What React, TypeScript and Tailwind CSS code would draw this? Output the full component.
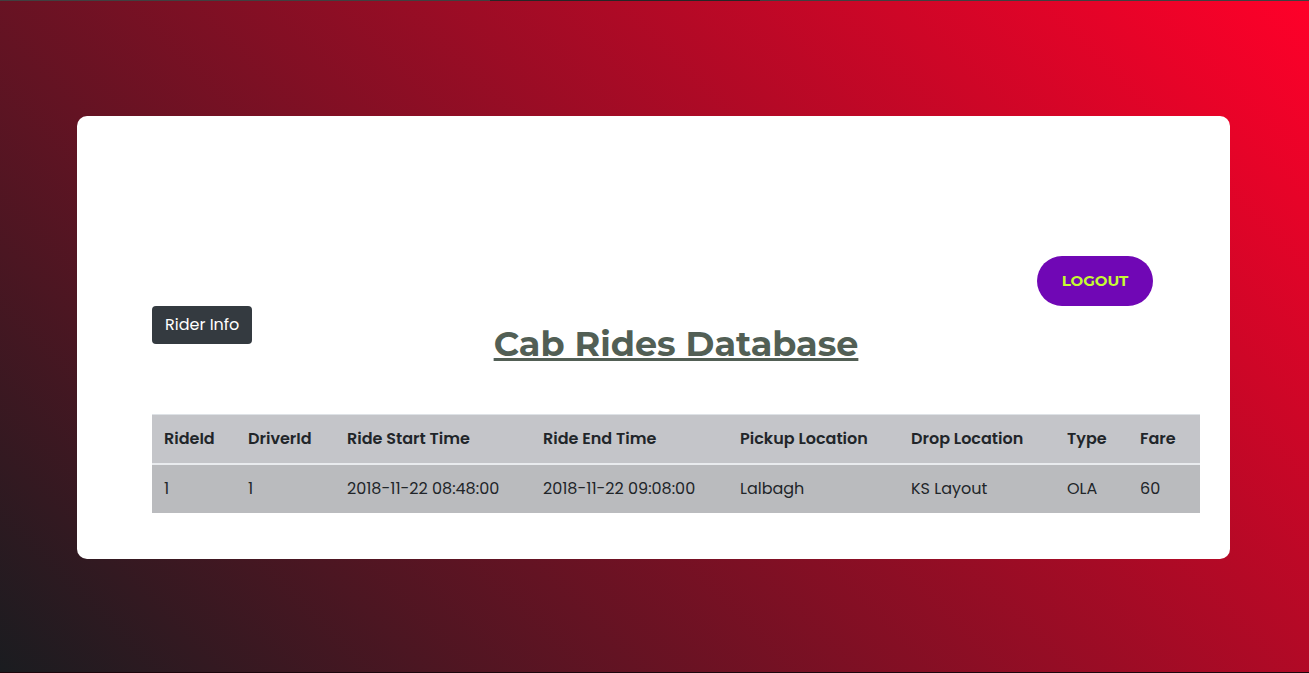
const columns = [
  { label: "RideId", width: "w-[84px]" },
  { label: "DriverId", width: "w-[99px]" },
  { label: "Ride Start Time", width: "w-[196px]" },
  { label: "Ride End Time", width: "w-[197px]" },
  { label: "Pickup Location", width: "w-[171px]" },
  { label: "Drop Location", width: "w-[156px]" },
  { label: "Type", width: "w-[73px]" },
  { label: "Fare", width: "w-[72px]" },
];

const rides = [
  ["1", "1", "2018-11-22 08:48:00", "2018-11-22 09:08:00", "Lalbagh", "KS Layout", "OLA", "60"],
];

export default function App() {
  return (
    <div className="flex min-h-screen flex-col border-b border-[#1c060c] bg-[linear-gradient(45deg,#1a1c20,#ff0029)] font-[Poppins,Inter,sans-serif] text-base text-[#212529]">
      <div className="flex h-px justify-center bg-[#404040]">
        <div className="mr-[59px] w-[270px] bg-[#262626]" />
      </div>
      <main className="flex flex-1 flex-col justify-center pt-0.5 pr-[79px] pl-[77px]">
        <section className="flex flex-col rounded-[10px] bg-white pt-[140px] pr-[30px] pb-[46px] pl-[75px]">
          <button
            type="button"
            className="mr-[47px] h-[50px] w-[116px] self-end rounded-full bg-[#7007b5] font-[Montserrat,Inter,sans-serif] text-[15px] font-bold text-[#c6fb32]"
          >
            LOGOUT
          </button>
          <button
            type="button"
            className="h-[38px] self-start rounded bg-[#343a40] px-[13px] text-white"
          >
            Rider Info
          </button>
          <h1 className="-mt-[22px] mb-12 self-center font-[Montserrat,Inter,sans-serif] text-[35px] leading-[44px] font-bold text-[#525f55] underline decoration-3 underline-offset-2">
            Cab Rides Database
          </h1>
          <table className="w-full table-fixed border-collapse bg-[#c6c8ca] text-left">
            <thead>
              <tr className="h-[49px] border-t border-b-2 border-t-[#dee2e6] border-b-[#e9ebee] bg-[#c4c5c9]">
                {columns.map((column) => (
                  <th key={column.label} scope="col" className={`${column.width} px-3 font-semibold whitespace-nowrap`}>
                    {column.label}
                  </th>
                ))}
              </tr>
            </thead>
            <tbody>
              {rides.map((ride) => (
                <tr key={ride[0]} className="h-[49px] bg-[#babbbe]">
                  {ride.map((value, index) => (
                    <td key={columns[index].label} className="px-3 whitespace-nowrap">
                      {value}
                    </td>
                  ))}
                </tr>
              ))}
            </tbody>
          </table>
        </section>
      </main>
    </div>
  );
}
